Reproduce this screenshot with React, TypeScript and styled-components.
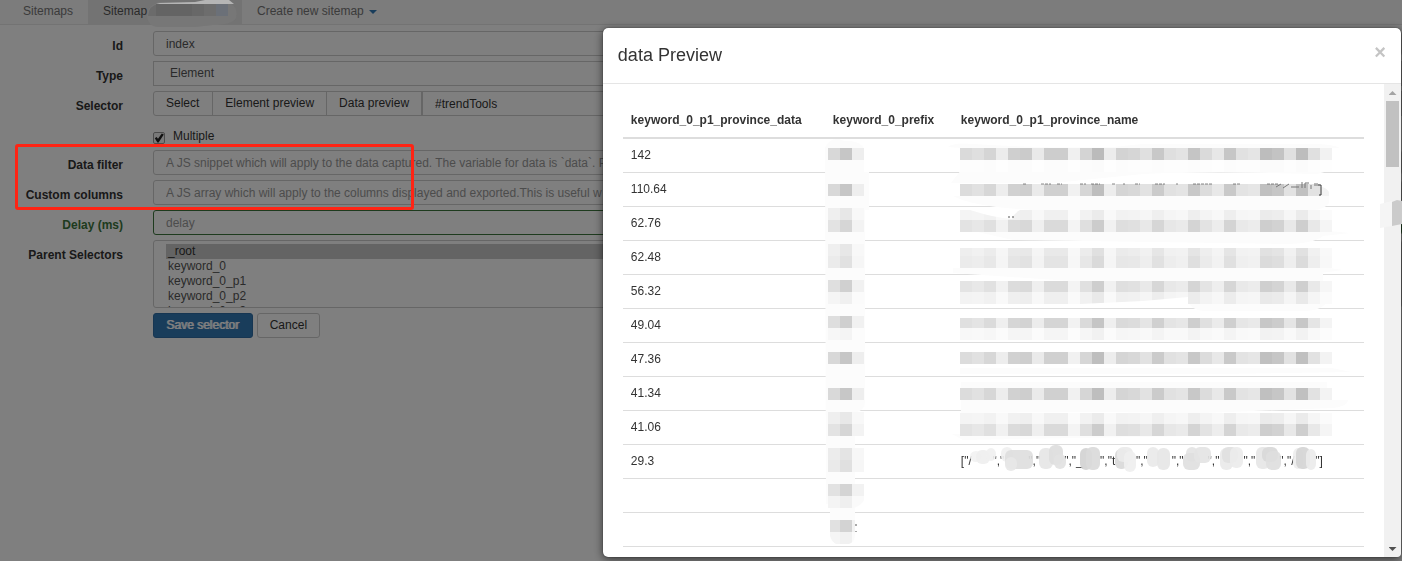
import React from "react";
import styled, { createGlobalStyle, css } from "styled-components";

const GlobalStyle = createGlobalStyle`
  * { box-sizing: border-box; }
  body {
    margin: 0;
    background: #fff;
    color: #333;
    font: 12px/17px "Liberation Sans", Arial, sans-serif;
    overflow: hidden;
  }
  button, input, select { font: inherit; color: inherit; margin: 0; }
`;

const Page = styled.div`
  position: relative;
  min-height: 100vh;
`;

const Nav = styled.nav`
  display: flex;
  height: 25px;
  padding-left: 8px;
  background: #f8f8f8;
  border-bottom: 1px solid #e7e7e7;
`;

const NavLink = styled.a<{ $active?: boolean }>`
  display: flex;
  align-items: center;
  padding: 0 15px 1px;
  min-width: ${(p) => (p.$active ? "154px" : "0")};
  color: ${(p) => (p.$active ? "#555" : "#777")};
  background: ${(p) => (p.$active ? "#e7e7e7" : "transparent")};
  text-decoration: none;
`;

const Caret = styled.span`
  margin-left: 5px;
  border: 4px solid transparent;
  border-top-color: #337ab7;
  border-bottom-width: 0;
`;

const Form = styled.form`
  display: flex;
  flex-direction: column;
  gap: 5px;
  padding-top: 6px;
`;

const Row = styled.div`
  display: grid;
  grid-template-columns: 123px 1fr;
  column-gap: 30px;
  align-items: start;
`;

const Label = styled.label<{ $valid?: boolean }>`
  padding-top: 7px;
  text-align: right;
  font-weight: bold;
  white-space: nowrap;
  color: ${(p) => (p.$valid ? "#3c763d" : "#333")};
`;

const control = css`
  width: 100%;
  height: 25px;
  padding: 0 12px;
  border: 1px solid #ccc;
  border-radius: 3px;
  background: #fff;
  color: #555;
  outline: none;
`;

const TextInput = styled.input<{ $valid?: boolean; $joined?: boolean }>`
  ${control}
  ${(p) => p.$valid && "border-color: #3c763d;"}
  ${(p) => p.$joined && "border-radius: 0; flex: 1; color: #333;"}
  &::placeholder { color: #999; opacity: 1; }
`;

const TypeSelect = styled.select`
  ${control}
  appearance: none;
  padding-left: 16px;
  border-radius: 0;
`;

const ListBox = styled.select`
  ${control}
  display: block;
  height: 68px;
  padding: 3px 12px;
  overflow: hidden;
`;

const ListOption = styled.option`
  min-height: 15px;
  height: 15px;
  padding: 0 2px;
  line-height: 15px;
  &:checked { background: #c8c8c8 linear-gradient(#c8c8c8, #c8c8c8); color: #333; }
`;

const Group = styled.div`
  display: flex;
`;

const Button = styled.button<{ $primary?: boolean; $segment?: "first" | "middle" }>`
  height: 25px;
  padding: 0 ${(p) => (p.$segment === "first" || p.$primary ? "13px" : "12px")} 1px 12px;
  border: 1px solid ${(p) => (p.$primary ? "#2e6da4" : "#ccc")};
  border-radius: ${(p) => (p.$segment === "first" ? "3px 0 0 3px" : p.$segment ? "0" : "3px")};
  margin-left: ${(p) => (p.$segment === "middle" ? "-1px" : "0")};
  background: ${(p) => (p.$primary ? "#337ab7" : "#fff")};
  color: ${(p) => (p.$primary ? "#fff" : "#333")};
  text-shadow: ${(p) => (p.$primary ? "1px 0 #fff" : "none")};
  white-space: nowrap;
`;

const Actions = styled.div`
  grid-column: 2;
  display: flex;
  gap: 4px;
`;

const CheckLabel = styled.label`
  grid-column: 2;
  display: flex;
  align-items: flex-start;
  gap: 8px;
  height: 24px;
  padding-top: 7px;
`;

const CheckBox = styled.input`
  appearance: none;
  display: grid;
  width: 12px;
  height: 12px;
  margin-top: 4px;
  border: 1px solid #999;
  border-radius: 2px;
  background: #f2f2f2;
  &:checked::before {
    content: "";
    width: 10px;
    height: 10px;
    background: #222;
    clip-path: polygon(8% 52%, 26% 40%, 40% 58%, 78% 6%, 98% 16%, 46% 94%, 34% 94%);
  }
`;

const Backdrop = styled.div`
  position: fixed;
  inset: 0;
  background: rgba(0, 0, 0, 0.5);
`;

const Highlight = styled.div`
  position: absolute;
  top: 144px;
  left: 15px;
  width: 399px;
  height: 66px;
  border: 3px solid #ff2414;
  border-radius: 3px;
`;

const NavSmudge = styled.svg`
  position: absolute;
  top: 0;
  left: 145px;
`;

const Modal = styled.section`
  position: fixed;
  inset: 28px 1px 4px 43%;
  display: flex;
  flex-direction: column;
  border-radius: 5px;
  background: #fff;
  box-shadow: 0 2px 10px rgba(0, 0, 0, 0.6), 0 0 1px #000;
`;

const ModalHeader = styled.header`
  display: flex;
  justify-content: space-between;
  padding: 15px;
  border-bottom: 1px solid #e5e5e5;
`;

const Title = styled.h4`
  margin: 0;
  font-size: 18px;
  font-weight: normal;
  line-height: 25px;
`;

const Close = styled.button`
  height: 18px;
  padding: 0;
  border: 0;
  background: none;
  color: #c4c4c4;
  font-size: 20px;
  font-weight: bold;
  line-height: 18px;
`;

const ModalMain = styled.div`
  display: flex;
  flex: 1;
  min-height: 0;
`;

const ModalBody = styled.div`
  flex: 1;
  min-width: 0;
  padding: 20px 20px 0;
  overflow: hidden;
`;

const TableWrap = styled.div`
  position: relative;
`;

const Table = styled.table`
  width: 100%;
  table-layout: fixed;
  border-collapse: separate;
  border-spacing: 0;
`;

const Th = styled.th<{ $width?: number }>`
  width: ${(p) => (p.$width ? `${p.$width}px` : "auto")};
  height: 35px;
  padding: 8px;
  border-bottom: 2px solid #ddd;
  text-align: left;
`;

const Td = styled.td`
  height: 34px;
  padding: 8px;
  border-bottom: 1px solid #ddd;
  white-space: nowrap;
`;

const Hidden = styled.span<{ $width: number }>`
  display: inline-block;
  width: ${(p) => p.$width}px;
`;

const Redaction = styled.svg`
  position: absolute;
  top: 0;
  left: 0;
  pointer-events: none;
`;

const ScrollBar = styled.div`
  display: flex;
  flex-direction: column;
  align-items: center;
  width: 17px;
  padding: 6px 0;
  background: #f1f1f1;
  border-bottom-right-radius: 4px;
`;

const Arrow = styled.span<{ $down?: boolean }>`
  width: 8px;
  height: 4px;
  margin-top: ${(p) => (p.$down ? "auto" : "1px")};
  background: ${(p) => (p.$down ? "#505050" : "#a3a3a3")};
  clip-path: ${(p) => (p.$down ? "polygon(0 0, 100% 0, 50% 100%)" : "polygon(50% 0, 100% 100%, 0 100%)")};
`;

const Thumb = styled.div`
  width: 13px;
  height: 66px;
  margin-top: 6px;
  background: #c1c1c1;
`;

const EdgeSmudge = styled.svg`
  position: absolute;
  top: 172px;
  right: -1px;
`;

const values = ["142", "110.64", "62.76", "62.48", "56.32", "49.04", "47.36", "41.34", "41.06", "29.3", "", ""];
const fragments = ["/", "", "", "_", "t", "", "", "", "", "/"];

const nameShades = [
  0xda, 0xdf, 0xd5, 0xec, 0xcf, 0xcb, 0xe9, 0xcd, 0xcd, 0xf0, 0xd4, 0xbb, 0xec, 0xd3, 0xd6, 0xe0,
  0xc8, 0xdf, 0xe3, 0xc5, 0xda, 0xe7, 0xc6, 0xe1, 0xe5, 0xbd, 0xc3, 0xe0, 0xbd, 0xe0, 0xf2,
];
const prefixShades = [0xd8, 0xc6, 0xee];

// Each strip: top, height, strength of the tint. Tops are measured from the table's top edge.
const nameStrips = [
  [44, 12, 1], [56, 12, 0.06], [80, 12, 0.95],
  [106, 10, 0.3], [116, 12, 0.75],
  [144, 8, 0.45], [152, 12, 0.55],
  [177, 11, 0.72], [188, 12, 0.33],
  [214, 10, 0.85], [224, 12, 0.2],
  [248, 12, 0.95], [284, 12, 0.95],
  [309, 11, 0.3], [320, 12, 0.75],
];
const prefixStrips = [
  [44, 12, 1], [80, 12, 1], [104, 12, 0.42], [116, 12, 0.72],
  [140, 12, 0.42], [152, 12, 0.52], [176, 12, 0.82], [188, 12, 0.26],
  [212, 12, 0.85], [224, 12, 0.2], [248, 12, 1], [284, 12, 0.98],
  [308, 12, 0.4], [320, 12, 0.72], [344, 12, 0.48], [356, 12, 0.55],
  [380, 12, 0.75], [392, 12, 0.28], [416, 12, 0.78], [428, 12, 0.25],
];

// Grey stamps over the last listed value: left, top, width, height, grey.
const stamps = [
  [347, 347, 12, 11, "#f2f2f2"], [353, 346, 14, 14, "#efefef"], [363, 344, 10, 13, "#f0f0f0"],
  [378, 343, 12, 15, "#f0f0f0"], [382, 346, 28, 19, "#dedede"], [382, 353, 12, 14, "#e7e7e7"],
  [416, 344, 14, 21, "#e6e6e6"], [426, 341, 14, 20, "#dddddd"], [431, 350, 12, 15, "#e2e2e2"],
  [457, 344, 12, 22, "#d2d2d2"], [463, 343, 14, 23, "#dadada"],
  [492, 345, 13, 20, "#d9d9d9"], [494, 343, 16, 15, "#eaeaea"], [501, 347, 12, 21, "#efefef"],
  [524, 343, 12, 20, "#e9e9e9"], [534, 344, 13, 22, "#e6e6e6"],
  [563, 343, 12, 15, "#e4e4e4"], [560, 349, 17, 17, "#e0e0e0"], [571, 343, 17, 16, "#e4e4e4"],
  [597, 344, 13, 22, "#e9e9e9"], [599, 343, 16, 16, "#dfdfdf"], [607, 343, 13, 21, "#ececec"],
  [633, 343, 14, 22, "#e6e6e6"], [639, 343, 16, 15, "#d8d8d8"], [643, 347, 15, 19, "#dedede"],
  [670, 344, 10, 21, "#eeeeee"], [673, 343, 14, 22, "#d5d5d5"], [683, 345, 10, 21, "#ececec"],
] as const;

const tint = (shade: number, strength: number) => {
  const v = Math.round(255 - (255 - shade) * strength);
  return `rgb(${v},${v},${v})`;
};

function Strips({ left, shades, strips }: { left: number; shades: number[]; strips: number[][] }) {
  return (
    <g shapeRendering="crispEdges">
      {strips.map(([top, height, strength]) =>
        shades.map((shade, i) => (
          <rect key={`${top}-${i}`} x={left + i * 12} y={top} width={12} height={height} fill={tint(shade, strength)} />
        )),
      )}
    </g>
  );
}

function RedactionMarks() {
  return (
    <Redaction width="741" height="445" viewBox="0 0 741 445" aria-hidden="true">
      <g fill="#fcfcfc">
        <path d="M202 44 Q206 34 216 35 Q222 38 228 37 Q238 38 241 45 V68 H246 V106 H242 V298 Q242 306 232 309 V430 Q231 440 220 440 Q207 440 207 426 V400 H203 Z" />
        <path d="M325 43 Q330 38 350 40 Q430 45 490 43 L520 40 H690 Q710 40 717 44 H709 V64 Q700 70 690 70 Q590 67 520 70 L430 79 H328 L338 66 V44 Z" />
        <path d="M330 92 H706 V99 Q701 106 690 106 H410 Q350 103 330 92 Z" />
        <path d="M350 127 H706 L727 129 L700 132 Q690 140 660 140 L390 136 Z" />
        <path d="M330 164 H706 L720 166 L690 170 Q590 178 550 184 L330 169 Z" />
        <path d="M560 178 L610 171 L700 169 V177 H560 Z M564 196 H705 Q700 207 680 207 H580 Q568 206 564 196 Z" />
        <path d="M337 264 L709 264 L728 268 L600 270 H337 Z" />
        <path d="M338 278 H704 V296 H725 Q725 302 710 304 L580 309 L480 308 L338 309 Z" />
        <path d="M329 330 L560 330 L709 326 L690 330 L340 336 Z" />
      </g>
      <Strips left={205} shades={prefixShades} strips={prefixStrips} />
      <Strips left={337} shades={nameShades} strips={nameStrips} />
      <path d="M241 392 V396 Q240 400 231 404 H241 Z M205 416 H207 V432 Q209 438 213 440 H205 Z M241 416 H232 V430 Q232 438 226 440 H241 Z" fill="#fff" />
      <path d="M337 105 L347 106 Q372 114 389 115 Q391 109 397 106 Z M457 200 L520 197 L565 193 V200 Z" fill="#fff" />
      <path d="M697 80 H709 V92 H706 V88 Q703 83 697 83 Z" fill="#fff" />
      <path d="M400 80 h3 M418 80 h10 m6 0 h5 m18 0 h6 m5 0 h9 m12 0 h3 m8 0 h2 m10 0 h5 m15 0 h10 m11 0 h2 m15 0 h20 m20 0 h8 m26 0 h12" stroke="#555" strokeDasharray="3 1" opacity=".7" fill="none" />
      <path d="M653 83 l5 -3 m2 4 l6 -4 m2 3 h8 m3 -5 v6 m3 0 v-5 h4 m2 6 v-4 m4 -2 v3 m2 -3 v3" stroke="#777" fill="none" />
      <path d="M695 81 h3 v10 h-2" stroke="#333" fill="none" />
      <path d="M385 113 h2 m2 0 h2 M232 421 h2 m-1 6 v1" stroke="#555" fill="none" />
      {stamps.map(([x, y, w, h, fill], i) => (
        <rect key={i} x={x} y={y} width={w} height={h} rx="6" fill={fill} fillOpacity=".92" />
      ))}
    </Redaction>
  );
}

function SelectorForm() {
  return (
    <Form onSubmit={(e) => e.preventDefault()}>
      <Row>
        <Label htmlFor="id">Id</Label>
        <TextInput id="id" defaultValue="index" />
      </Row>
      <Row>
        <Label htmlFor="type">Type</Label>
        <TypeSelect id="type"><option>Element</option></TypeSelect>
      </Row>
      <Row>
        <Label htmlFor="selector">Selector</Label>
        <Group>
          <Button type="button" $segment="first">Select</Button>
          <Button type="button" $segment="middle">Element preview</Button>
          <Button type="button" $segment="middle">Data preview</Button>
          <TextInput id="selector" $joined defaultValue="#trendTools" />
        </Group>
      </Row>
      <Row>
        <CheckLabel><CheckBox type="checkbox" defaultChecked />Multiple</CheckLabel>
      </Row>
      <Row>
        <Label htmlFor="filter">Data filter</Label>
        <TextInput id="filter" placeholder="A JS snippet which will apply to the data captured. The variable for data is `data`. P" />
      </Row>
      <Row>
        <Label htmlFor="columns">Custom columns</Label>
        <TextInput id="columns" placeholder="A JS array which will apply to the columns displayed and exported.This is useful w" />
      </Row>
      <Row>
        <Label htmlFor="delay" $valid>Delay (ms)</Label>
        <TextInput id="delay" $valid placeholder="delay" />
      </Row>
      <Row>
        <Label htmlFor="parents">Parent Selectors</Label>
        <ListBox id="parents" multiple size={4} defaultValue={["_root"]}>
          {["_root", "keyword_0", "keyword_0_p1", "keyword_0_p2", "keyword_0_p3"].map((name) => (
            <ListOption key={name} value={name}>{name}</ListOption>
          ))}
        </ListBox>
      </Row>
      <Row>
        <Actions>
          <Button type="submit" $primary>Save selector</Button>
          <Button type="button">Cancel</Button>
        </Actions>
      </Row>
    </Form>
  );
}

function PreviewTable() {
  return (
    <Table>
      <thead>
        <tr>
          <Th $width={202}>keyword_0_p1_province_data</Th>
          <Th $width={128}>keyword_0_prefix</Th>
          <Th>keyword_0_p1_province_name</Th>
        </tr>
      </thead>
      <tbody>
        {values.map((value, row) => (
          <tr key={row}>
            <Td>{value}</Td>
            <Td />
            <Td>
              {value === "29.3" && (
                <>
                  {'["'}
                  {fragments.map((f, i) => (
                    <React.Fragment key={i}>
                      {i > 0 && '","'}
                      <Hidden $width={24}>{f}</Hidden>
                    </React.Fragment>
                  ))}
                  {'"]'}
                </>
              )}
            </Td>
          </tr>
        ))}
      </tbody>
    </Table>
  );
}

export default function App() {
  return (
    <Page>
      <GlobalStyle />
      <Nav>
        <NavLink href="#sitemaps">Sitemaps</NavLink>
        <NavLink href="#sitemap" $active>Sitemap</NavLink>
        <NavLink href="#create">Create new sitemap<Caret /></NavLink>
      </Nav>
      <SelectorForm />
      <Backdrop />
      <NavSmudge width="95" height="28" viewBox="0 0 95 28" aria-hidden="true">
        <path d="M2 16 Q3 4 14 3 H85 Q94 8 91 18 Q87 25 68 25 L50 27 H12 Q3 26 2 16 Z" fill="#777" />
        <path d="M3 16 Q4 5 14 4 H23 V16 Z" fill="#6b6b6b" />
        <path d="M11 4 H47 V16 H11 Z" fill="#646464" />
        <path d="M47 4 H59 V16 H47 Z" fill="#686868" />
        <path d="M59 4 H71 V16 H59 Z" fill="#6d6d6d" />
        <path d="M71 4 H83 V16 H71 Z" fill="#6b7078" />
        <path d="M11 3 L50 2 L60 0 H84 L89 4 H55 L15 4 Z" fill="#b5b5b5" />
      </NavSmudge>
      <Highlight />
      <Modal role="dialog" aria-labelledby="preview-title">
        <ModalHeader>
          <Title id="preview-title">data Preview</Title>
          <Close type="button" aria-label="Close">×</Close>
        </ModalHeader>
        <ModalMain>
          <ModalBody>
            <TableWrap>
              <PreviewTable />
              <RedactionMarks />
            </TableWrap>
          </ModalBody>
          <ScrollBar>
            <Arrow />
            <Thumb />
            <Arrow $down />
          </ScrollBar>
        </ModalMain>
        <EdgeSmudge width="22" height="28" viewBox="0 0 22 28" aria-hidden="true">
          <path d="M0 4 L12 1 V26 L0 28 Z" fill="#f5f5f5" />
          <path d="M12 2 L17 0 L22 1 V24 L12 26 Z" fill="#cbcbcb" />
        </EdgeSmudge>
      </Modal>
    </Page>
  );
}
